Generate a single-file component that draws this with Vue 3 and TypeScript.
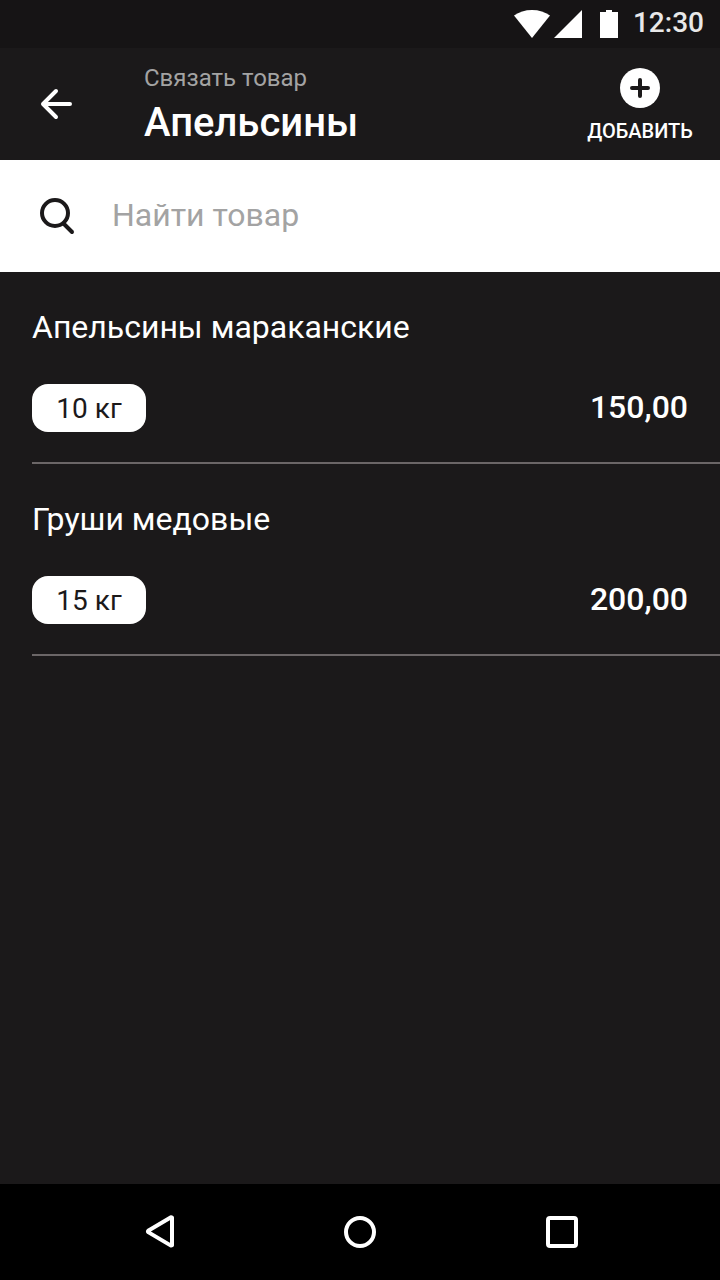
<script setup lang="ts">
import { ref } from 'vue'

interface Product {
  id: number
  name: string
  amount: string
  price: string
}

const query = ref('')

const products: Product[] = [
  { id: 1, name: 'Апельсины мараканские', amount: '10 кг', price: '150,00' },
  { id: 2, name: 'Груши медовые', amount: '15 кг', price: '200,00' },
]
</script>

<template>
  <div class="screen">
    <div class="status-bar">
      <svg class="status-icons" width="106" height="48" viewBox="0 0 106 48" fill="#fff">
        <path d="M0 15.6C5 12 11 10 18 10s13 2 18 5.600L18 38z" />
        <path d="M68 10v28H40z" />
        <path d="M86 12h6v-2h6v2h6v26H86z" />
      </svg>
      <span class="clock">12:30</span>
    </div>

    <header class="app-bar">
      <button class="back" type="button" aria-label="Назад">
        <svg width="40" height="40" viewBox="0 0 40 40" fill="none" stroke="#fff" stroke-width="4" stroke-linecap="round" stroke-linejoin="round">
          <path d="M34 20H7M20 7L7 20l13 13" />
        </svg>
      </button>
      <div class="heading">
        <span class="subtitle">Связать товар</span>
        <h1 class="title">Апельсины</h1>
      </div>
      <button class="add" type="button">
        <svg width="40" height="40" viewBox="0 0 40 40">
          <circle cx="20" cy="20" r="20" fill="#fff" />
          <path d="M20 12v16M12 20h16" fill="none" stroke="#1b191a" stroke-width="4" stroke-linecap="round" />
        </svg>
        <span class="add-label">ДОБАВИТЬ</span>
      </button>
    </header>

    <label class="search">
      <svg width="40" height="40" viewBox="0 0 40 40" fill="none" stroke="#1b191a" stroke-width="4" stroke-linecap="round">
        <circle cx="19" cy="17" r="13" />
        <path d="M28.500 28.500L36 36" />
      </svg>
      <input v-model="query" class="search-input" type="text" placeholder="Найти товар" />
    </label>

    <ul class="list">
      <li v-for="product in products" :key="product.id" class="item">
        <span class="name">{{ product.name }}</span>
        <div class="details">
          <span class="chip">{{ product.amount }}</span>
          <span class="price">{{ product.price }}</span>
        </div>
      </li>
    </ul>

    <nav class="nav-bar">
      <svg width="48" height="48" viewBox="0 0 48 48" fill="none" stroke="#fff" stroke-width="4" stroke-linejoin="round">
        <path d="M36 9.600v27.600a2 2 0 0 1-1 .400L12.600 24.400q-1.400-1 0-2L35 9.300a1.500 1.500 0 0 1 1 .300z" />
      </svg>
      <svg width="48" height="48" viewBox="0 0 48 48" fill="none" stroke="#fff" stroke-width="4">
        <circle cx="24" cy="24" r="14" />
      </svg>
      <svg width="48" height="48" viewBox="0 0 48 48" fill="none" stroke="#fff" stroke-width="4">
        <rect x="10" y="10" width="28" height="28" rx="2" />
      </svg>
    </nav>
  </div>
</template>

<style>
body {
  margin: 0;
  background: #1b191a;
}
</style>

<style scoped>
.screen {
  display: flex;
  flex-direction: column;
  width: 720px;
  height: 1280px;
  background: #1b191a;
  color: #fff;
  font-family: Roboto, 'Noto Sans', sans-serif;
  overflow: hidden;
}

.screen svg {
  display: block;
  flex: none;
}

button {
  padding: 0;
  border: 0;
  background: none;
  color: inherit;
  font: inherit;
}

.status-bar {
  display: flex;
  justify-content: flex-end;
  gap: 13px;
  height: 48px;
  padding-right: 16px;
  background: #161415;
}

.clock {
  color: #e8e8e8;
  font-size: 28px;
  font-weight: 500;
  line-height: 45px;
}

.app-bar {
  display: flex;
  height: 112px;
}

.back {
  display: flex;
  align-items: center;
  width: 144px;
  padding-left: 36px;
}

.heading {
  flex: 1;
  padding-top: 14px;
}

.subtitle {
  display: block;
  color: #a3a3a3;
  font-size: 24px;
  line-height: 32px;
}

.title {
  margin: 5px 0 0;
  font-size: 40px;
  font-weight: 500;
  line-height: 48px;
}

.add {
  display: flex;
  flex-direction: column;
  align-items: center;
  width: 160px;
  padding-top: 20px;
}

.add-label {
  margin-top: 11px;
  font-size: 20px;
  font-weight: 500;
  line-height: 24px;
}

.search {
  display: flex;
  align-items: center;
  gap: 36px;
  height: 112px;
  padding: 0 36px;
  box-sizing: border-box;
  background: #fff;
}

.search-input {
  flex: 1;
  height: 40px;
  margin-top: -2px;
  padding: 0;
  border: 0;
  outline: 0;
  background: none;
  color: #1b191a;
  font: 32px/40px Roboto, 'Noto Sans', sans-serif;
}

.search-input::placeholder {
  color: #a3a3a3;
  opacity: 1;
}

.list {
  flex: 1;
  margin: 0;
  padding: 0 0 0 32px;
  list-style: none;
}

.item {
  height: 192px;
  padding-top: 35px;
  border-bottom: 2px solid #6b6667;
  box-sizing: border-box;
}

.name {
  display: block;
  font-size: 32px;
  line-height: 40px;
}

.details {
  display: flex;
  align-items: center;
  justify-content: space-between;
  margin-top: 37px;
  padding-right: 32px;
}

.chip {
  width: 114px;
  height: 48px;
  border-radius: 16px;
  background: #fff;
  color: #1b191a;
  font-size: 28px;
  line-height: 50px;
  text-align: center;
}

.price {
  margin-top: -2px;
  font-size: 32px;
  font-weight: 500;
  line-height: 40px;
}

.nav-bar {
  display: grid;
  grid-template-columns: 200px 202px 48px;
  align-items: center;
  height: 96px;
  padding-left: 136px;
  background: #000;
}
</style>
